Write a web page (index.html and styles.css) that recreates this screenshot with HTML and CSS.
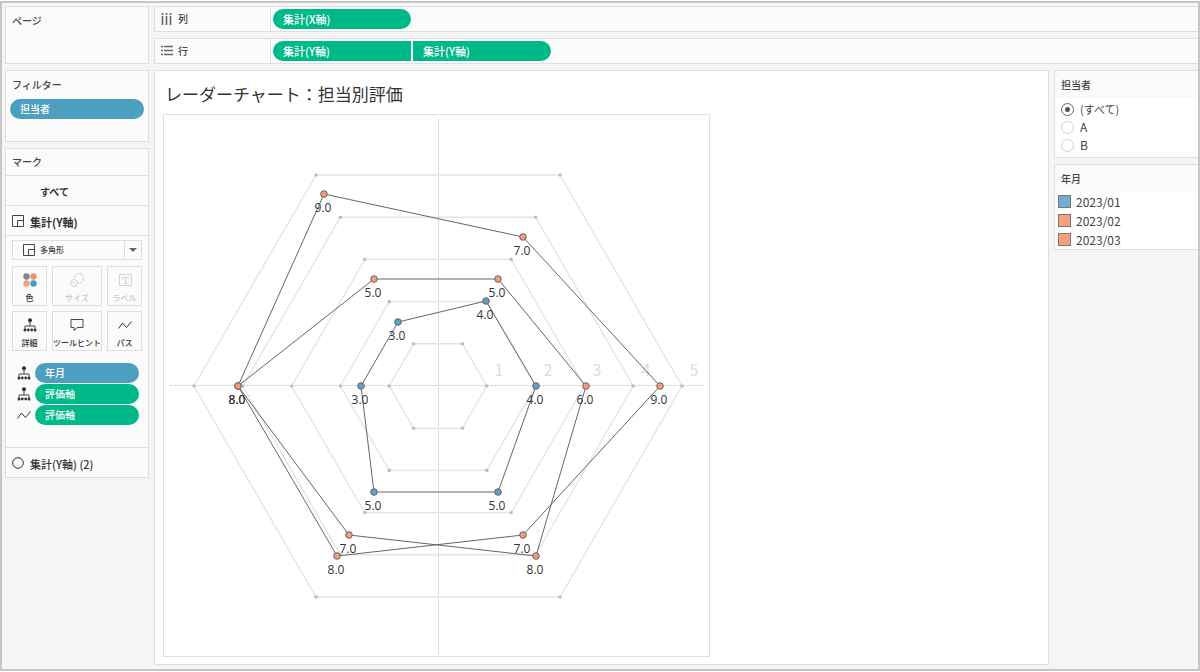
FILE: index.html
```html
<!DOCTYPE html>
<html lang="ja">
<head>
<meta charset="utf-8">
<meta name="viewport" content="width=device-width, initial-scale=1">
<title>レーダーチャート：担当別評価</title>
<link rel="stylesheet" href="styles.css">
</head>
<body>
<svg class="defs" width="0" height="0" aria-hidden="true">
  <symbol id="i-polygon" viewBox="0 0 12 12"><path d="M.5.5h11v11H.5zM5.5 11.500v-6h6" fill="none" stroke="#444"/></symbol>
  <symbol id="i-detail" viewBox="0 0 14 14"><g fill="#333"><circle cx="7" cy="2.200" r="2"/><circle cx="2" cy="12" r="1.500"/><circle cx="5.300" cy="12" r="1.400"/><circle cx="8.700" cy="12" r="1.400"/><circle cx="12" cy="12" r="1.500"/></g><path d="M7 3v5M2 11V8h10v3" fill="none" stroke="#444"/></symbol>
  <symbol id="i-path" viewBox="0 0 14 10"><path d="M.5 8.500 4.500 3l4 4.500 5-6" fill="none" stroke="#333"/></symbol>
</svg>
<div class="app">
  <aside class="side">
    <section class="card pages"><h2 class="card-title">ページ</h2></section>
    <section class="card filters">
      <h2 class="card-title">フィルター</h2>
      <button class="pill blue" type="button">担当者</button>
    </section>
    <section class="card marks">
      <h2 class="marks-title">マーク</h2>
      <button class="layer all" type="button">すべて</button>
      <button class="layer" type="button"><svg width="12" height="12"><use href="#i-polygon"/></svg><span>集計(Y軸)</span></button>
      <div class="marks-body">
        <div class="mark-type">
          <svg width="12" height="12"><use href="#i-polygon"/></svg>
          <select aria-label="マークの種類"><option>多角形</option></select>
          <span class="caret"></span>
        </div>
        <div class="mark-buttons">
          <button type="button"><svg width="16" height="16" viewBox="0 0 16 16"><circle cx="4.500" cy="4.500" r="3.200" fill="#7f858c"/><circle cx="11.500" cy="4.500" r="3.200" fill="#f28e6b"/><circle cx="4.500" cy="11.500" r="3.200" fill="#f5a07a"/><circle cx="11.500" cy="11.500" r="3.200" fill="#4b9cbc"/></svg>色</button>
          <button type="button" disabled><svg width="16" height="16" viewBox="0 0 16 16" fill="none" stroke="#d2d2d2"><path d="M5 6a4.800 4.800 0 1 1 4.500 5"/><circle cx="5" cy="11" r="3.500"/><path d="m3.500 9.500 3 3"/></svg>サイズ</button>
          <button type="button" disabled><svg width="16" height="16" viewBox="0 0 16 16" fill="none" stroke="#d2d2d2"><path d="M2.500 2.500h12v11h-12zM5.500 7V5.500h6V7M8.500 5.500v6M7 11.500h3"/></svg>ラベル</button>
          <button type="button"><svg width="14" height="16"><use href="#i-detail"/></svg>詳細</button>
          <button type="button"><svg width="16" height="16" viewBox="0 0 16 16"><path d="M2 2.500h12v8H8.500L5 13.500v-3H2z" fill="none" stroke="#444" stroke-linejoin="round"/></svg>ツールヒント</button>
          <button type="button"><svg width="14" height="16"><use href="#i-path"/></svg>パス</button>
        </div>
        <ul class="mark-pills">
          <li><svg width="14" height="14"><use href="#i-detail"/></svg><button class="pill blue" type="button">年月</button></li>
          <li><svg width="14" height="14"><use href="#i-detail"/></svg><button class="pill" type="button">評価軸</button></li>
          <li><svg width="14" height="10"><use href="#i-path"/></svg><button class="pill" type="button">評価軸</button></li>
        </ul>
      </div>
      <button class="layer last" type="button"><svg width="12" height="12" viewBox="0 0 12 12"><circle cx="6" cy="6" r="5.300" fill="none" stroke="#333"/></svg><span>集計(Y軸) (2)</span></button>
    </section>
  </aside>

  <div class="work">
    <section class="card shelf">
      <h2 class="shelf-name"><svg width="12" height="12" viewBox="0 0 12 12" stroke="#666" stroke-width="1.600"><path d="M1.500 0v2M5.500 0v2M9.500 0v2M1.500 3v9M5.500 3v9M9.500 3v9"/></svg>列</h2>
      <div class="shelf-pills"><button class="pill" type="button">集計(X軸)</button></div>
    </section>
    <section class="card shelf">
      <h2 class="shelf-name"><svg width="12" height="12" viewBox="0 0 12 12" stroke="#666" stroke-width="1.600"><path d="M0 1.500h2M0 5.500h2M0 9.500h2M3 1.500h9M3 5.500h9M3 9.500h9"/></svg>行</h2>
      <div class="shelf-pills"><button class="pill first" type="button">集計(Y軸)</button><button class="pill second" type="button">集計(Y軸)</button></div>
    </section>
    <div class="view">
      <main class="card sheet">
        <h1>レーダーチャート：担当別評価</h1>
        <div class="plot">
          <svg class="radar" viewBox="-274 -271 545 541" role="img" aria-label="担当別評価のレーダーチャート">
            <path class="axis" d="M-268-.5H266M.5-267V269"/>
            <g class="ring">
              <path d="M48.800 0 24.400 42.200h-48.800L-48.800 0l24.400-42.200h48.800z"/>
              <path d="M97.600 0 48.800 84.400h-97.600L-97.600 0l48.800-84.400h97.600z"/>
              <path d="M146.400 0 73.200 126.600h-146.400L-146.400 0l73.200-126.600h146.400z"/>
              <path d="M195.200 0 97.600 168.800h-195.200L-195.200 0l97.600-168.800h195.200z"/>
              <path d="M244 0 122 211h-244L-244 0l122-211h244z"/>
            </g>
            <g class="scale"><text x="61" y="-10">1</text><text x="110" y="-10">2</text><text x="159" y="-10">3</text><text x="208" y="-10">4</text><text x="256" y="-10">5</text></g>
            <g class="series">
              <path d="M-114-192 85-149 222 0 85 149-101 170-200 0z"/>
              <path d="M-64-107H60L148 0 98 170-89 149-200 0z"/>
              <path d="M-40-64 48-85 98 0 60 106H-64L-77 0z"/>
            </g>
            <g id="points"></g>
          </svg>
        </div>
      </main>
      <aside class="legends">
        <section class="card legend people" role="radiogroup" aria-labelledby="people-title">
          <h2 class="legend-title" id="people-title">担当者</h2>
          <div class="legend-items">
            <label><input type="radio" name="person" checked>(すべて)</label>
            <label><input type="radio" name="person">A</label>
            <label><input type="radio" name="person">B</label>
          </div>
        </section>
        <section class="card legend months">
          <h2 class="legend-title">年月</h2>
          <ul class="legend-items">
            <li><span class="swatch m1"></span>2023/01</li>
            <li><span class="swatch"></span>2023/02</li>
            <li><span class="swatch"></span>2023/03</li>
          </ul>
        </section>
      </aside>
    </div>
  </div>
</div>
<script src="chart.js"></script>
</body>
</html>
```
FILE: styles.css
```css
* { box-sizing: border-box; }
body {
  margin: 0;
  min-height: 100vh;
  padding: 1px 0;
  display: flex;
  background: #fff;
  color: #444;
  font: 500 10px/16px "Noto Sans CJK JP", sans-serif;
}
h1, h2, ul { margin: 0; padding: 0; font: inherit; list-style: none; }
button, select, input { font: inherit; color: inherit; margin: 0; }
button { padding: 0; border: 0; background: none; cursor: pointer; }
svg { display: block; flex: none; }
.defs { position: absolute; }

.app {
  flex: 1;
  display: grid;
  grid-template-columns: 144px minmax(0, 1fr);
  gap: 5px;
  padding: 3px 0 4px 3px;
  border: 2px solid #c5c6c6;
  background: #f5f5f5;
}
.side, .work { display: flex; flex-direction: column; gap: 6px; }
.card { border: 1px solid #dedede; background: #fbfbfb; }
.card-title { padding: 6px; }
.pages { min-height: 58px; }
.filters { min-height: 72px; padding-bottom: 22px; }
.filters .pill { width: calc(100% - 8px); margin: 0 4px; }

.pill {
  display: block;
  height: 20px;
  padding: 0 10px;
  border-radius: 10px;
  background: #00b98a;
  color: #fff;
  text-align: left;
}
.pill.blue { background: #4c9fbe; }

.marks-title { padding: 5px 6px; }
.layer {
  display: flex;
  align-items: center;
  gap: 6px;
  width: 100%;
  height: 30px;
  padding: 0 6px;
  border-top: 1px solid #dedede;
  color: #333;
  font-size: 11px;
  font-weight: 700;
}
.layer span { padding-top: 2px; }
.layer.all { padding: 3px 34px 0; font-size: 10px; }
.layer.last { font-weight: 500; }
.marks-body { padding: 4px 6px 22px; border-top: 1px solid #dedede; }
.mark-type {
  display: flex;
  align-items: center;
  height: 20px;
  padding-left: 10px;
  border: 1px solid #dedede;
}
.mark-type select {
  flex: 1;
  min-width: 0;
  height: 18px;
  padding: 0 0 0 5px;
  border: 0;
  background: none;
  appearance: none;
  font-size: 8px;
}
.caret { display: grid; place-items: center; width: 17px; height: 18px; border-left: 1px solid #dedede; }
.caret::after { content: ""; border: 4px solid transparent; border-top: 4px solid #666; border-bottom: 0; }
.mark-buttons {
  display: grid;
  grid-template-columns: 35px minmax(0, 1fr) 35px;
  gap: 5px;
  margin-top: 6px;
}
.mark-buttons button {
  display: flex;
  flex-direction: column;
  align-items: center;
  gap: 4px;
  height: 40px;
  padding-top: 5px;
  border: 1px solid #dedede;
  color: #333;
  font-size: 8px;
  line-height: 12px;
  white-space: nowrap;
}
.mark-buttons button:disabled { color: #c8c8c8; }
.mark-pills { display: grid; gap: 1px; margin-top: 12px; }
.mark-pills li { display: flex; align-items: center; gap: 4px; padding: 0 3px 0 5px; }
.mark-pills .pill { flex: 1; }

.shelf { display: flex; min-height: 26px; border-right: 0; }
.shelf-name { display: flex; align-items: center; gap: 5px; width: 116px; padding-left: 6px; border-right: 1px solid #dedede; }
.shelf-pills { display: flex; align-items: center; gap: 2px; padding: 2px; font-size: 11px; }
.shelf-pills .pill { width: 138px; }
.pill.first { border-radius: 10px 0 0 10px; }
.pill.second { border-radius: 0 10px 10px 0; }

.view { flex: 1; display: grid; grid-template-columns: minmax(0, 1fr) 144px; gap: 5px; }
.sheet { padding: 10px 8px 7px; background: #fff; }
h1 { padding: 0 2px 7px; font-size: 17px; line-height: 26px; font-weight: 400; color: #333; }
.plot { max-width: 547px; border: 1px solid #dedede; }
.radar { width: 100%; height: auto; }
.axis { fill: none; stroke: #d4d4d4; stroke-dasharray: 3 1; }
.ring path { fill: none; stroke: #e4e4e4; stroke-width: 1.4; }
.ring-dot { fill: #b5c2c7; }
.scale { fill: #dcdcdc; font-size: 16px; font-weight: 400; text-anchor: middle; }
.series path { fill: none; stroke: #666; }
.dot { fill: #f39c77; stroke: #666; }
.dot.m1 { fill: #5ba3c4; }
.value { fill: #333; font: 400 12px "Open Sans", sans-serif; text-anchor: middle; }

.legends { display: flex; flex-direction: column; gap: 6px; }
.legend { border-right: 0; background: #fff; font-size: 12px; }
.legend-title { padding: 6px 6px 5px; background: #fafafa; font-size: 10px; }
.people .legend-items { padding: 2px 6px 3px; font-weight: 400; }
.people label { display: flex; align-items: center; gap: 6px; height: 18px; }
.people label:first-child { font-size: 11px; }
.people input {
  appearance: none;
  width: 13px;
  height: 13px;
  border: 1px solid #d0d0d0;
  border-radius: 50%;
  background: #fff;
}
.people input:checked { border-color: #666; background: radial-gradient(#555 0 2px, #fff 3px); }
.months .legend-items { font-weight: 400; }
.months li { display: flex; align-items: center; gap: 5px; height: 19px; padding-left: 3px; }
.swatch { width: 13px; height: 13px; border: 1px solid #777; background: #f5a07a; }
.swatch.m1 { background: #74add0; }
```
FILE: chart.js
```js
const NS = 'http://www.w3.org/2000/svg';
const add = (parent, tag, attrs, text) => {
  const el = document.createElementNS(NS, tag);
  for (const key in attrs) el.setAttribute(key, attrs[key]);
  if (text) el.textContent = text;
  parent.append(el);
};

const ring = document.querySelector('.ring');
for (let k = 1; k <= 5; k++) {
  for (const [x, y] of [[2, 0], [1, 1], [-1, 1], [-2, 0], [-1, -1], [1, -1]]) {
    add(ring, 'circle', { class: 'ring-dot', cx: x * 24.4 * k, cy: y * 42.2 * k, r: 1.8 });
  }
}

// x, y, score, month
const data = [
  [-114, -192, 9, 3], [85, -149, 7, 3], [222, 0, 9, 3], [85, 149, 7, 3], [-101, 170, 8, 3], [-200, 0, 8, 3],
  [-64, -107, 5, 2], [60, -107, 5, 2], [148, 0, 6, 2], [98, 170, 8, 2], [-89, 149, 7, 2], [-200, 0, 8, 2],
  [-40, -64, 3, 1], [48, -85, 4, 1], [98, 0, 4, 1], [60, 106, 5, 1], [-64, 106, 5, 1], [-77, 0, 3, 1]
];
const points = document.getElementById('points');
for (const [x, y, score, month] of data) {
  add(points, 'circle', { class: 'dot m' + month, cx: x, cy: y, r: 3.3 });
  add(points, 'text', { class: 'value', x: x - 1, y: y + 18 }, score.toFixed(1));
}
```
